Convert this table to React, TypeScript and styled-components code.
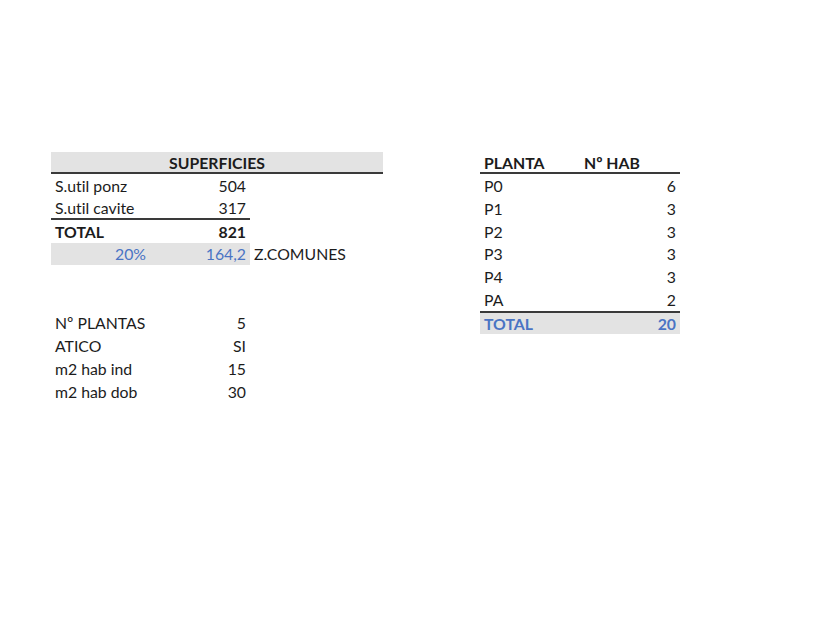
import React from "react";
import styled, { createGlobalStyle } from "styled-components";

const Global = createGlobalStyle`
  html, body { margin: 0; padding: 0; background: #ffffff; }
  body {
    font-family: "Lato", "Open Sans", sans-serif;
    color: #1c1c1c;
    font-variant-ligatures: none;
    font-feature-settings: "liga" 0, "clig" 0;
  }
`;

const Page = styled.div`
  width: 840px;
  height: 630px;
  box-sizing: border-box;
  padding: 152px 0 0 51px;
  display: flex;
  align-items: flex-start;
  gap: 97px;
`;

const Sheet = styled.div<{ $cols: string }>`
  display: grid;
  grid-template-columns: ${(p) => p.$cols};
  grid-template-rows: 22px;
  grid-auto-rows: 22.85px;
  font-size: 15.8px;
`;

const Cell = styled.div<{
  $align?: "left" | "right" | "center";
  $bold?: boolean;
  $blue?: boolean;
  $shade?: boolean;
  $span?: string;
  $bottom?: boolean;
  $top?: boolean;
}>`
  box-sizing: border-box;
  display: flex;
  align-items: center;
  justify-content: ${(p) =>
    p.$align === "right" ? "flex-end" : p.$align === "center" ? "center" : "flex-start"};
  padding: 0 4px;
  white-space: nowrap;
  font-weight: ${(p) => (p.$bold ? 700 : 400)};
  color: ${(p) => (p.$blue ? "#4a74c4" : "#1c1c1c")};
  background: ${(p) => (p.$shade ? "#e3e3e3" : "transparent")};
  grid-column: ${(p) => p.$span ?? "auto"};
  border-bottom: ${(p) => (p.$bottom ? "2px solid #3a3a3a" : "none")};
  border-top: ${(p) => (p.$top ? "2px solid #3a3a3a" : "none")};
`;

const Empty = styled.div<{ $span?: string }>`
  grid-column: ${(p) => p.$span ?? "auto"};
`;

const leftRows: [string, string][] = [
  ["Nº PLANTAS", "5"],
  ["ATICO", "SI"],
  ["m2 hab ind", "15"],
  ["m2 hab dob", "30"],
];

const plantas: [string, number][] = [
  ["P0", 6],
  ["P1", 3],
  ["P2", 3],
  ["P3", 3],
  ["P4", 3],
  ["PA", 2],
];

export default function App() {
  return (
    <>
      <Global />
      <Page>
        <Sheet $cols="99px 100px 66px 67px">
          <Cell $span="1 / -1" $align="center" $bold $shade $bottom>
            SUPERFICIES
          </Cell>
          <Cell>S.util ponz</Cell>
          <Cell $align="right">504</Cell>
          <Empty $span="span 2" />
          <Cell $bottom>S.util cavite</Cell>
          <Cell $align="right" $bottom>317</Cell>
          <Empty $span="span 2" />
          <Cell $bold>TOTAL</Cell>
          <Cell $align="right" $bold>821</Cell>
          <Empty $span="span 2" />
          <Cell $align="right" $blue $shade>20%</Cell>
          <Cell $align="right" $blue $shade>164,2</Cell>
          <Cell $span="span 2">Z.COMUNES</Cell>
          <Empty $span="1 / -1" />
          <Empty $span="1 / -1" />
          {leftRows.map(([k, v]) => (
            <React.Fragment key={k}>
              <Cell>{k}</Cell>
              <Cell $align="right">{v}</Cell>
              <Empty $span="span 2" />
            </React.Fragment>
          ))}
        </Sheet>
        <Sheet $cols="100px 100px">
          <Cell $bold $bottom>PLANTA</Cell>
          <Cell $bold $bottom>Nº HAB</Cell>
          {plantas.map(([k, v]) => (
            <React.Fragment key={k}>
              <Cell>{k}</Cell>
              <Cell $align="right">{v}</Cell>
            </React.Fragment>
          ))}
          <Cell $bold $blue $shade $top>TOTAL</Cell>
          <Cell $align="right" $bold $blue $shade $top>20</Cell>
        </Sheet>
      </Page>
    </>
  );
}
